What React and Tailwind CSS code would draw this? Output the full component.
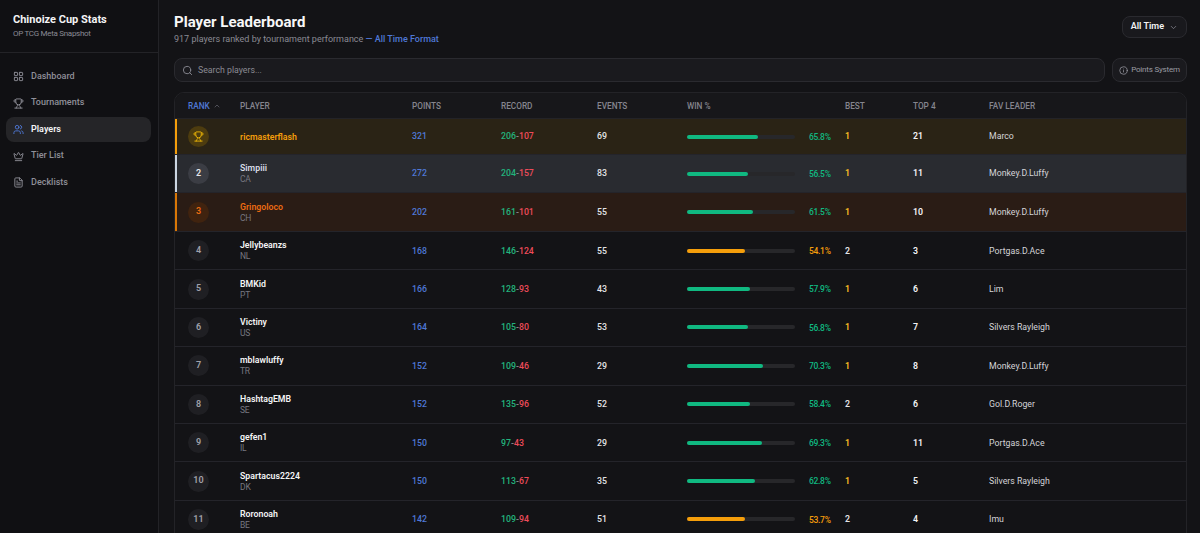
import React from "react";
import { LayoutGrid, Trophy, Users, Crown, FileText, Search, Info, ChevronDown, ChevronUp } from "lucide-react";

const navItems = [
  { label: "Dashboard", icon: LayoutGrid },
  { label: "Tournaments", icon: Trophy },
  { label: "Players", icon: Users, active: true },
  { label: "Tier List", icon: Crown },
  { label: "Decklists", icon: FileText },
];

const players = [
  { rank: 1, name: "ricmasterflash", country: "", points: 321, wins: 206, losses: 107, events: 69, pct: 65.8, best: 1, top4: 21, leader: "Marco" },
  { rank: 2, name: "Simpiii", country: "CA", points: 272, wins: 204, losses: 157, events: 83, pct: 56.5, best: 1, top4: 11, leader: "Monkey.D.Luffy" },
  { rank: 3, name: "Gringoloco", country: "CH", points: 202, wins: 161, losses: 101, events: 55, pct: 61.5, best: 1, top4: 10, leader: "Monkey.D.Luffy" },
  { rank: 4, name: "Jellybeanzs", country: "NL", points: 168, wins: 146, losses: 124, events: 55, pct: 54.1, best: 2, top4: 3, leader: "Portgas.D.Ace" },
  { rank: 5, name: "BMKid", country: "PT", points: 166, wins: 128, losses: 93, events: 43, pct: 57.9, best: 1, top4: 6, leader: "Lim" },
  { rank: 6, name: "Victiny", country: "US", points: 164, wins: 105, losses: 80, events: 53, pct: 56.8, best: 1, top4: 7, leader: "Silvers Rayleigh" },
  { rank: 7, name: "mblawluffy", country: "TR", points: 152, wins: 109, losses: 46, events: 29, pct: 70.3, best: 1, top4: 8, leader: "Monkey.D.Luffy" },
  { rank: 8, name: "HashtagEMB", country: "SE", points: 152, wins: 135, losses: 96, events: 52, pct: 58.4, best: 2, top4: 6, leader: "Gol.D.Roger" },
  { rank: 9, name: "gefen1", country: "IL", points: 150, wins: 97, losses: 43, events: 29, pct: 69.3, best: 1, top4: 11, leader: "Portgas.D.Ace" },
  { rank: 10, name: "Spartacus2224", country: "DK", points: 150, wins: 113, losses: 67, events: 35, pct: 62.8, best: 1, top4: 5, leader: "Silvers Rayleigh" },
  { rank: 11, name: "Roronoah", country: "BE", points: 142, wins: 109, losses: 94, events: 51, pct: 53.7, best: 2, top4: 4, leader: "Imu" },
];

const gridCols = "grid grid-cols-[65px_172px_89px_96px_90px_158px_68px_76px_1fr] items-center";

// estilos de las tres primeras filas
const rowStyles = {
  1: { row: "bg-[#2a2315] h-[36px]", bar: "bg-[#f59e0b]", name: "text-[#f59e0b]", badge: "bg-[#4d3c0f] text-[#eab308]" },
  2: { row: "bg-[#292b30] h-[38px]", bar: "bg-[#cbd5e1]", name: "text-[#d7dce6]", badge: "bg-[#3b3d44] text-[#e5e7eb]" },
  3: { row: "bg-[#2a1c15] h-[39px]", bar: "bg-[#d97706]", name: "text-[#ea6a12]", badge: "bg-[#40230f] text-[#ea6a12]" },
};

const Row = ({ p }) => {
  const style = rowStyles[p.rank];
  const good = p.pct >= 55;
  return (
    <div className={`${gridCols} relative border-b border-[#24242a] ${style ? style.row : "h-[38.4px]"}`}>
      {style && <div className={`absolute left-0 top-0 bottom-0 w-[2px] ${style.bar}`} />}
      <div className="pl-[13px]">
        <div className={`w-[21px] h-[21px] rounded-full flex items-center justify-center text-[9px] font-semibold ${style ? style.badge : "bg-[#1f1f23] text-[#a1a1aa]"}`}>
          {p.rank === 1 ? <Trophy size={11} strokeWidth={2} /> : p.rank}
        </div>
      </div>
      <div>
        <div className={`text-[8.75px] leading-[12px] font-semibold ${style ? style.name : "text-[#f4f4f5]"}`}>{p.name}</div>
        {p.country && <div className="text-[8.5px] leading-[11px] tracking-[-0.2px] text-[#777780]">{p.country}</div>}
      </div>
      <div className="pt-[1px] text-[8.75px] text-[#4f78d6] font-medium">{p.points}</div>
      <div className="pt-[1px] text-[8.75px] font-medium">
        <span className="text-[#22b37d]">{p.wins}</span>
        <span className="text-[#8b8b93]">-</span>
        <span className="text-[#ee4b5a]">{p.losses}</span>
      </div>
      <div className="pt-[1px] text-[8.75px] text-[#e4e4e7] font-medium">{p.events}</div>
      <div className="flex items-center">
        <div className="w-[108px] h-[4px] rounded-full bg-[#27272a]">
          <div
            className={`h-full rounded-full ${good ? "bg-[#10b981]" : "bg-[#f59e0b]"}`}
            style={{ width: `${p.pct}%` }}
          />
        </div>
        <span className={`ml-[14px] pt-[1px] text-[8.5px] tracking-[-0.3px] font-medium ${good ? "text-[#10b981]" : "text-[#f59e0b]"}`}>{p.pct}%</span>
      </div>
      <div className={`pt-[1px] text-[8.75px] font-semibold ${p.best === 1 ? "text-[#fbbf24]" : "text-[#e4e4e7]"}`}>{p.best}</div>
      <div className="pt-[1px] text-[8.75px] font-semibold text-[#f4f4f5]">{p.top4}</div>
      <div className="pt-[1px] text-[8.75px] text-[#d4d4d8]">{p.leader}</div>
    </div>
  );
};

const App = () => {
  return (
    <div className="flex h-[533px] overflow-hidden bg-[#131316] font-['Roboto',sans-serif]">
      {/* Sidebar */}
      <aside className="w-[159px] shrink-0 bg-[#101013] border-r border-[#232327]">
        <div className="h-[53px] border-b border-[#232327] pl-[13px] pt-[12px]">
          <div className="text-[11px] leading-[15px] font-bold text-[#f4f4f5]">Chinoize Cup Stats</div>
          <div className="text-[8px] leading-[12px] mt-[1px] tracking-[-0.3px] text-[#8a8a93]">OP TCG Meta Snapshot</div>
        </div>
        <nav className="flex flex-col gap-[1.5px] pl-[6px] pr-[7px] pt-[11px]">
          {navItems.map((item) => {
            const Icon = item.icon;
            return (
              <div
                key={item.label}
                className={`flex items-center gap-[7px] h-[25px] pl-[7px] rounded-[8px] text-[9px] font-medium ${item.active ? "bg-[#252528] text-[#f4f4f5] font-semibold" : "text-[#8f8f98]"}`}
              >
                <Icon size={11} className={item.active ? "text-[#4f78d6]" : "text-[#8f8f98]"} />
                {item.label}
              </div>
            );
          })}
        </nav>
      </aside>

      {/* Main */}
      <main className="flex-1 min-w-0 pl-[15px] pr-[13px]">
        <div className="flex justify-between items-start h-[58px] pt-[12px]">
          <div>
            <h1 className="text-[15px] leading-[20px] font-bold text-[#f8f8f8]">Player Leaderboard</h1>
            <p className="text-[9px] leading-[12px] mt-[1px] text-[#8a8a93]">
              917 players ranked by tournament performance <span className="text-[#4f78d6] font-medium">— All Time Format</span>
            </p>
          </div>
          <button className="flex items-center gap-[5px] h-[22px] mt-[4px] px-[8px] rounded-[8px] bg-[#19191d] border border-[#2a2a2f] text-[9px] font-semibold text-[#f4f4f5]">
            All Time <ChevronDown size={9} className="text-[#8a8a93]" />
          </button>
        </div>

        <div className="flex gap-[7px] h-[24px]">
          <div className="flex-1 flex items-center gap-[5px] pl-[7px] rounded-[8px] bg-[#1a1a1e] border border-[#2a2a2f] text-[8.75px] text-[#8a8a93]">
            <Search size={11} />
            <span className="pt-[1px]">Search players...</span>
          </div>
          <div className="w-[75px] flex items-center justify-center gap-[3px] rounded-[8px] bg-[#1a1a1e] border border-[#2a2a2f] text-[8px] tracking-[-0.2px] text-[#9a9aa3]">
            <Info size={9} />
            Points System
          </div>
        </div>

        <div className="mt-[10px] rounded-t-[10px] border border-[#232327] overflow-hidden">
          <div className={`${gridCols} h-[26px] pt-[1px] bg-[#17171a] border-b border-[#232327] text-[8.25px] font-medium text-[#85858e]`}>
            <div className="pl-[13px] flex items-center gap-[3px] text-[#4f78d6]">RANK <ChevronUp size={8} className="text-[#6b6b75]" /></div>
            <div>PLAYER</div>
            <div>POINTS</div>
            <div>RECORD</div>
            <div>EVENTS</div>
            <div>WIN %</div>
            <div>BEST</div>
            <div>TOP 4</div>
            <div>FAV LEADER</div>
          </div>
          {players.map((p) => (
            <Row key={p.rank} p={p} />
          ))}
        </div>
      </main>
    </div>
  );
};

export default App;
